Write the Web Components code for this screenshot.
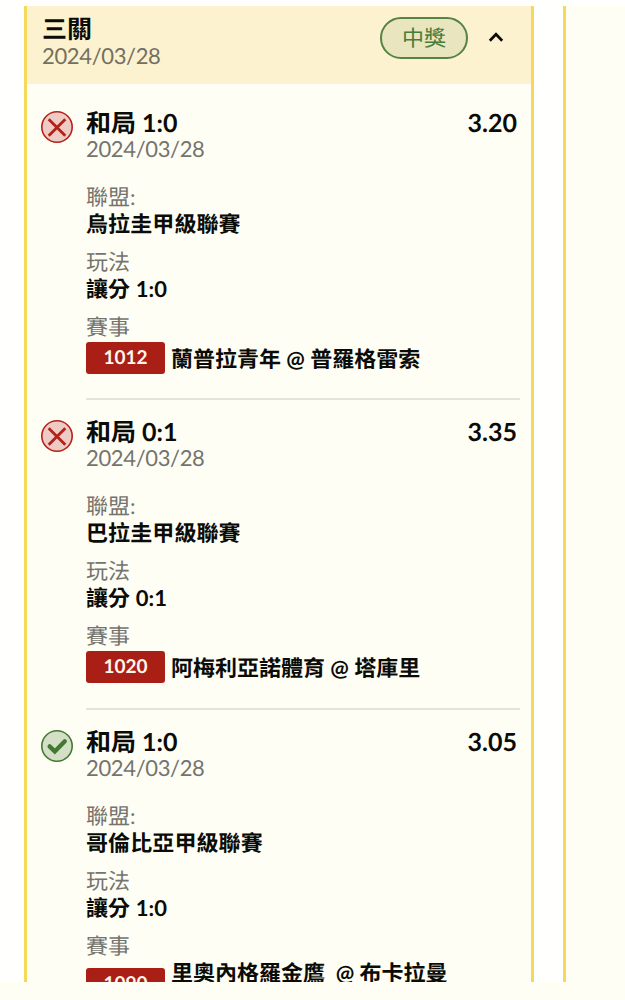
<!DOCTYPE html>
<html lang="zh-Hant">
  <head>
    <meta charset="UTF-8" />
    <meta name="viewport" content="width=device-width, initial-scale=1.0" />
    <title>三關</title>
    <style>
      body {
        margin: 0;
        height: 1000px;
        overflow: hidden;
        background-color: #fffef5;
        color: #0b0b08;
        font-family: Lato, "Noto Sans CJK TC", sans-serif;
        font-size: 22px;
        text-rendering: geometricPrecision;
      }
    </style>
  </head>
  <body>
    <template id="bet-board-template">
      <style>
        :host {
          display: flex;
          box-sizing: border-box;
          height: 982px;
          padding: 6px 0 0 24px;
          gap: 29px;
          overflow: hidden;
          background-color: #fffffe;
        }
        .ticket,
        .next {
          box-sizing: border-box;
          height: 976px;
          overflow: hidden;
          border-left: 3px solid #f4da58;
          background-color: #fffef5;
        }
        .ticket {
          flex: none;
          width: 510px;
          border-right: 3px solid #f4da58;
        }
        .next {
          flex: 1;
        }
      </style>
      <div class="ticket"><slot></slot></div>
      <div class="next"></div>
    </template>

    <template id="ticket-header-template">
      <style>
        :host {
          display: flex;
          box-sizing: border-box;
          height: 78px;
          margin-bottom: 7px;
          padding: 11px 27px 0 15px;
          background-color: #fcf2cf;
        }
        .text {
          flex: 1;
          margin-top: -1px;
        }
        .title {
          height: 27px;
          line-height: 27px;
          font-size: 25px;
          font-weight: 700;
        }
        .date {
          height: 26px;
          line-height: 26px;
          color: #74705f;
          letter-spacing: -0.35px;
        }
        .status {
          box-sizing: border-box;
          width: 88px;
          height: 42px;
          border: 2px solid #568342;
          border-radius: 21px;
          background-color: #e9e5bf;
          color: #4b7b39;
          line-height: 38px;
          text-align: center;
        }
        svg {
          width: 16px;
          height: 12px;
          margin: 14px 0 0 20px;
        }
      </style>
      <div class="text">
        <div class="title"><slot name="title"></slot></div>
        <div class="date"><slot name="date"></slot></div>
      </div>
      <div class="status"><slot name="status"></slot></div>
      <svg viewBox="0 0 16 12">
        <path d="M1.8 9.7 8 3.2l6.2 6.5" fill="none" stroke="#0b0b08" stroke-width="2.7" />
      </svg>
    </template>

    <template id="result-icon-template">
      <style>
        :host {
          display: block;
          width: 32px;
          height: 32px;
        }
        svg {
          display: block;
        }
        .win,
        :host([result="win"]) .lose {
          display: none;
        }
        :host([result="win"]) .win {
          display: block;
        }
      </style>
      <svg width="32" height="32" viewBox="0 0 32 32" fill="none">
        <g class="lose" stroke="#b32219">
          <circle cx="16" cy="16" r="15.2" fill="#eecbc4" stroke-width="1.6" />
          <path d="M7.7 8.2 24.3 24.8M24.3 8.2 7.7 24.8" stroke-width="2.8" />
        </g>
        <g class="win" stroke="#40792f">
          <circle cx="16" cy="16" r="15.2" fill="#d5dfc7" stroke-width="1.6" />
          <path d="m8.6 16.4 5.2 5 10-10.2" stroke-width="4.3" stroke-linecap="round" />
        </g>
      </svg>
    </template>

    <template id="bet-leg-template">
      <style>
        :host {
          display: flex;
          height: 309.4px;
          padding: 0 11px 0 14px;
          gap: 13px;
        }
        result-icon {
          flex: none;
          margin-top: 20px;
        }
        .body {
          flex: 1;
          box-sizing: border-box;
          padding-top: 18px;
          border-bottom: 2px solid #e5e4dc;
        }
        .top {
          display: flex;
          justify-content: space-between;
          height: 27px;
          padding-right: 3px;
          line-height: 28px;
          font-size: 25px;
          font-weight: 700;
        }
        .date {
          height: 26px;
          line-height: 26px;
          color: #74746f;
          letter-spacing: -0.35px;
        }
        dl {
          margin: 21px 0 0;
        }
        dt {
          height: 27px;
          line-height: 27px;
          color: #74746f;
        }
        dd {
          height: 27px;
          margin: 0 0 11px;
          line-height: 27px;
          font-weight: 700;
          letter-spacing: 0.1px;
        }
        dd.match {
          display: flex;
          align-items: center;
          height: 32px;
          margin: 2px 0 0;
          gap: 6px;
          letter-spacing: 0;
          white-space: pre;
        }
        .number {
          box-sizing: border-box;
          width: 79px;
          height: 32px;
          border-radius: 3px;
          background-color: #a91e15;
          color: #fff7ec;
          font-size: 19px;
          line-height: 32px;
          text-align: center;
        }
        :host([long]) .number {
          margin-top: 14px;
        }
        :host([long]) .teams {
          margin-top: -8px;
        }
      </style>
      <result-icon></result-icon>
      <div class="body">
        <div class="top">
          <slot name="pick"></slot>
          <slot name="odds"></slot>
        </div>
        <div class="date"><slot name="date"></slot></div>
        <dl>
          <dt>聯盟:</dt>
          <dd><slot name="league"></slot></dd>
          <dt>玩法</dt>
          <dd><slot name="play"></slot></dd>
          <dt>賽事</dt>
          <dd class="match">
            <div class="number"><slot name="number"></slot></div>
            <div class="teams"><slot name="teams"></slot></div>
          </dd>
        </dl>
      </div>
    </template>

    <bet-board>
      <ticket-header>
        <span slot="title">三關</span>
        <span slot="date">2024/03/28</span>
        <span slot="status">中獎</span>
      </ticket-header>
      <bet-leg result="lose">
        <span slot="pick">和局 1:0</span>
        <span slot="odds">3.20</span>
        <span slot="date">2024/03/28</span>
        <span slot="league">烏拉圭甲級聯賽</span>
        <span slot="play">讓分 1:0</span>
        <span slot="number">1012</span>
        <span slot="teams">蘭普拉青年 @ 普羅格雷索</span>
      </bet-leg>
      <bet-leg result="lose">
        <span slot="pick">和局 0:1</span>
        <span slot="odds">3.35</span>
        <span slot="date">2024/03/28</span>
        <span slot="league">巴拉圭甲級聯賽</span>
        <span slot="play">讓分 0:1</span>
        <span slot="number">1020</span>
        <span slot="teams">阿梅利亞諾體育 @ 塔庫里</span>
      </bet-leg>
      <bet-leg result="win" long>
        <span slot="pick">和局 1:0</span>
        <span slot="odds">3.05</span>
        <span slot="date">2024/03/28</span>
        <span slot="league">哥倫比亞甲級聯賽</span>
        <span slot="play">讓分 1:0</span>
        <span slot="number">1090</span>
        <span slot="teams">里奧內格羅金鷹  @ 布卡拉曼</span>
      </bet-leg>
    </bet-board>

    <script>
      class TemplateElement extends HTMLElement {
        constructor() {
          super();
          this.attachShadow({ mode: "open" });
        }

        connectedCallback() {
          if (this.shadowRoot.childNodes.length) return;
          const template = document.querySelector(`#${this.localName}-template`);
          this.shadowRoot.appendChild(template.content.cloneNode(true));
        }
      }

      class BetBoard extends TemplateElement {}
      class TicketHeader extends TemplateElement {}
      class ResultIcon extends TemplateElement {}

      class BetLeg extends TemplateElement {
        connectedCallback() {
          super.connectedCallback();
          this.shadowRoot
            .querySelector("result-icon")
            .setAttribute("result", this.getAttribute("result"));
        }
      }

      customElements.define("result-icon", ResultIcon);
      customElements.define("ticket-header", TicketHeader);
      customElements.define("bet-leg", BetLeg);
      customElements.define("bet-board", BetBoard);
    </script>
  </body>
</html>
